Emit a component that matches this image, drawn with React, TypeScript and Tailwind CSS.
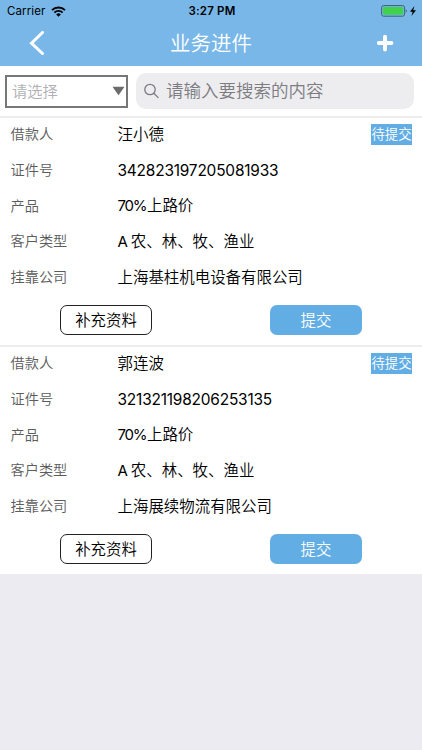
import { useState, type ReactNode } from "react";

interface Application {
  id: number;
  borrower: string;
  idNumber: string;
  rate: string;
  product: string;
  customerGrade: string;
  customerType: string;
  company: string;
  status: string;
}

const applications: Application[] = [
  {
    id: 1,
    borrower: "汪小德",
    idNumber: "342823197205081933",
    rate: "70%",
    product: "上路价",
    customerGrade: "A",
    customerType: "农、林、牧、渔业",
    company: "上海基柱机电设备有限公司",
    status: "待提交",
  },
  {
    id: 2,
    borrower: "郭连波",
    idNumber: "321321198206253135",
    rate: "70%",
    product: "上路价",
    customerGrade: "A",
    customerType: "农、林、牧、渔业",
    company: "上海展续物流有限公司",
    status: "待提交",
  },
];

const StatusBar = () => (
  <div className="grid h-[22px] grid-cols-3 items-center pl-[7px] pr-[5px] text-black">
    <div className="flex items-center gap-[6px]">
      <span className="pt-px text-[11.5px] tracking-[0.1px]">Carrier</span>
      <svg width="15" height="11" viewBox="0 0 15 11" fill="none">
        <path d="M1 4.1a9.3 9.3 0 0 1 13 0" stroke="#000" strokeWidth="2" />
        <path d="M3.4 6.6a5.9 5.9 0 0 1 8.2 0" stroke="#000" strokeWidth="1.8" />
        <path d="M5.2 8.4a3.3 3.3 0 0 1 4.6 0L7.5 10.7z" fill="#000" />
      </svg>
    </div>
    <span className="pt-px text-center text-[11.5px] font-semibold tracking-[0.2px]">3:27 PM</span>
    <div className="flex items-center justify-end">
      <svg width="36" height="12" viewBox="0 0 36 12">
        <rect x="0.6" y="0.6" width="23" height="10.6" rx="2" fill="none" stroke="#3d6078" />
        <rect x="2" y="2" width="20.2" height="7.8" rx="1" fill="#41d14d" />
        <path d="M24.8 4.2c1.4.5 1.4 3 0 3.4z" fill="#3d6078" />
        <path d="M33.4 1 29 6.7h2.7L30.4 11 35 5.2h-2.8z" fill="#000" />
      </svg>
    </div>
  </div>
);

const Row = ({ label, status, children }: { label: string; status?: string; children: ReactNode }) => (
  <div className="flex h-[22px] items-center">
    <span className="w-[107px] text-[14.2px] font-[350] text-[#5c5c5c]">{label}</span>
    <span className="flex-1 pt-[2px] text-[15.45px] font-[350] text-black">{children}</span>
    {status && (
      <span className="flex h-[21px] w-[41px] items-center justify-center whitespace-nowrap bg-[#62ade4] pt-px text-[13.4px] font-[350] text-white">
        {status}
      </span>
    )}
  </div>
);

const App = () => {
  const [keyword, setKeyword] = useState("");

  return (
    <div className="h-[750px] w-[422px] overflow-hidden bg-[#ebebf1] font-['Inter','Noto_Sans_CJK_SC',sans-serif]">
      {/* Header */}
      <header className="h-[66px] bg-[#78b7e8]">
        <StatusBar />
        <div className="flex h-[42px] items-center justify-between pl-[29px] pr-[28px]">
          <button>
            <svg width="17" height="24" viewBox="0 0 17 24" fill="none" stroke="#fff" strokeWidth="3">
              <path d="M13.5 1.5 2.5 12.2 13.5 22.5" strokeLinecap="round" />
            </svg>
          </button>
          <h1 className="pt-[2px] text-[20.5px] font-[350] text-white">业务进件</h1>
          <button>
            <svg width="18" height="18" viewBox="0 0 18 18" stroke="#fff" strokeWidth="4">
              <path d="M9 2.8v12.6M2.8 9h12.6" strokeLinecap="round" />
            </svg>
          </button>
        </div>
      </header>

      {/* Filter */}
      <div className="flex h-[50px] items-center gap-2 bg-white pl-[5px] pr-[8px]">
        <button className="flex h-[33px] w-[123px] items-center justify-between border-2 border-[#777777] pl-[5px] pr-px text-[15.3px] font-[350] text-[#b0b0b6]">
          <span className="pt-[2px]">请选择</span>
          <svg width="13" height="10" viewBox="0 0 13 10">
            <path d="M.5 .8h12L6.5 9.3z" fill="#6b6b6b" />
          </svg>
        </button>
        <div className="flex h-[36px] flex-1 items-center gap-[7px] rounded-[10px] bg-[#ededf0] pl-[8px]">
          <svg width="15" height="16" viewBox="0 0 15 16" fill="none" stroke="#7b7b80" strokeWidth="1.3">
            <circle cx="6" cy="6.5" r="5.2" />
            <path d="m9.8 10.3 4.6 4.6" />
          </svg>
          <input
            value={keyword}
            onChange={(e) => setKeyword(e.target.value)}
            placeholder="请输入要搜索的内容"
            className="w-[220px] bg-transparent text-[17.5px] font-[350] outline-none placeholder:text-[#7c7c81]"
          />
        </div>
      </div>

      {/* Application list */}
      {applications.map((a) => (
        <section key={a.id} className="h-[229px] border-t-2 border-[#ececee] bg-white pt-[5px]">
          <div className="flex flex-col gap-[13.6px] pl-[10.5px] pr-[10px]">
            <Row label="借款人" status={a.status}>{a.borrower}</Row>
            <Row label="证件号">
              <span className="font-normal tracking-[-0.2px]">{a.idNumber}</span>
            </Row>
            <Row label="产品">
              <span className="text-[15px] font-normal tracking-[-1.2px]">{a.rate}</span>
              <span className="ml-[0.6px]">{a.product}</span>
            </Row>
            <Row label="客户类型">
              <span className="mr-[3px] text-[15px] font-normal">{a.customerGrade}</span>
              <span>{a.customerType}</span>
            </Row>
            <Row label="挂靠公司">{a.company}</Row>
          </div>
          <div className="mt-[17.6px] flex justify-between px-[60px] text-[15.4px] font-[350]">
            <button className="h-[30px] w-[92px] rounded-[7px] border border-[#222222] pt-px text-black">补充资料</button>
            <button className="h-[30px] w-[92px] rounded-[7px] bg-[#62ade4] pt-[2px] text-white">提交</button>
          </div>
        </section>
      ))}
    </div>
  );
};

export default App;
